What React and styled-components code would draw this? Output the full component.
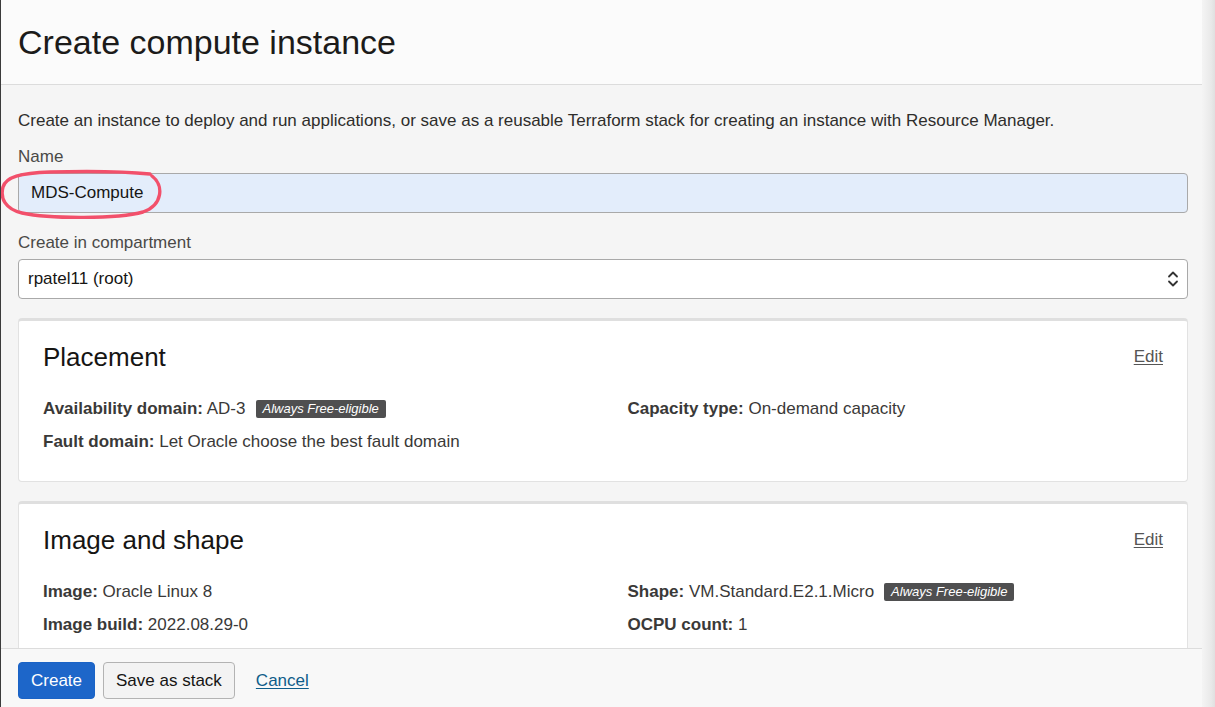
import React from "react";
import styled, { createGlobalStyle } from "styled-components";

const Global = createGlobalStyle`
  html, body { margin: 0; padding: 0; }
  body {
    font-family: "Liberation Sans", Arial, sans-serif;
    color: #161513;
    background: #f5f5f5;
  }
  #root { height: 707px; }
  * { box-sizing: border-box; }
`;

const Screen = styled.div`
  display: flex;
  height: 707px;
  overflow: hidden;
`;

const Panel = styled.div`
  flex: 1;
  display: flex;
  flex-direction: column;
  border-left: 1px solid #3b3b3b;
  background: #f5f5f5;
  min-width: 0;
`;

const EdgeShadow = styled.div`
  width: 13px;
  background: linear-gradient(to right, #f4f4f4, #e9e9e9 70%, #e0e0e0);
`;

const Header = styled.header`
  height: 85px;
  flex: none;
  background: #fbfbfb;
  border-bottom: 1px solid #dcdcdc;
  padding: 22px 17px 0;
`;

const Title = styled.h1`
  margin: 0;
  font-weight: 400;
  font-size: 34px;
  line-height: 40px;
  color: #1c1b1a;
`;

const Body = styled.main`
  flex: 1;
  overflow: hidden;
  padding: 26px 14px 0 17px;
`;

const Intro = styled.p`
  margin: 0 0 16px;
  font-size: 17px;
  line-height: 20px;
  color: #2e2d2b;
`;

const Field = styled.div`
  display: flex;
  flex-direction: column;
  gap: 6px;
  margin-bottom: ${(p) => p.$mb || "20px"};
`;

const Label = styled.label`
  font-size: 17px;
  line-height: 20px;
  color: #4a4947;
`;

const InputWrap = styled.div`
  position: relative;
`;

const TextBox = styled.div`
  height: 40px;
  border: 1px solid #a9a9a9;
  border-radius: 4px;
  background: ${(p) => (p.$filled ? "#e3edfb" : "#ffffff")};
  display: flex;
  align-items: center;
  justify-content: space-between;
  padding: 0 8px 0 ${(p) => (p.$filled ? "12px" : "9px")};
  font-size: 17px;
  color: #161513;
`;

const Scribble = styled.svg`
  position: absolute;
  left: -18px;
  top: -4px;
  width: 180px;
  height: 52px;
  pointer-events: none;
  overflow: visible;
`;

const Card = styled.section`
  background: #ffffff;
  border: 1px solid #e2e2e2;
  border-top: 3px solid #dfdfdf;
  border-radius: 4px;
  padding: 20px 24px 24px 24px;
  margin-bottom: 19px;
  min-height: ${(p) => p.$minH || "auto"};
`;

const CardHead = styled.div`
  display: flex;
  justify-content: space-between;
  align-items: center;
  margin-bottom: 24px;
`;

const CardTitle = styled.h2`
  margin: 0;
  font-weight: 400;
  font-size: 26px;
  line-height: 32px;
  color: #161513;
`;

const EditLink = styled.a`
  font-size: 17px;
  color: #555;
  text-decoration: underline;
  text-underline-offset: 2px;
`;

const Grid = styled.div`
  display: grid;
  grid-template-columns: 1fr 1fr;
  column-gap: 49px;
  row-gap: 9px;
`;

const Item = styled.div`
  font-size: 17px;
  line-height: 24px;
  color: #3a3938;
  display: flex;
  align-items: center;
  white-space: pre;
`;

const Key = styled.b`
  font-weight: 700;
  color: #3a3938;
`;

const Badge = styled.span`
  display: inline-block;
  margin-left: 10px;
  background: #4f4f50;
  color: #fff;
  font-style: italic;
  font-size: 13px;
  line-height: 18px;
  padding: 0 7px;
  border-radius: 2px;
`;

const Footer = styled.footer`
  flex: none;
  height: 59px;
  border-top: 1px solid #dcdcdc;
  background: #f8f8f8;
  display: flex;
  align-items: flex-start;
  padding: 13px 17px 0;
  gap: 8px;
`;

const Button = styled.button`
  height: 37px;
  border-radius: 4px;
  font-family: inherit;
  font-size: 17px;
  padding: 0 12px;
  border: 1px solid ${(p) => (p.$primary ? "#1a63c6" : "#b3b3b3")};
  background: ${(p) => (p.$primary ? "#1d66c9" : "#f3f3f3")};
  color: ${(p) => (p.$primary ? "#ffffff" : "#161513")};
`;

const Cancel = styled.a`
  margin-left: 13px;
  font-size: 17px;
  line-height: 37px;
  color: #0f5d8a;
  text-decoration: underline;
  text-underline-offset: 2px;
`;

function UpDown() {
  return (
    <svg width="12" height="18" viewBox="0 0 12 18" fill="none" stroke="#333" strokeWidth="1.8" strokeLinecap="round" strokeLinejoin="round">
      <path d="M2 6.5 L6 2.5 L10 6.5" />
      <path d="M2 11.5 L6 15.5 L10 11.5" />
    </svg>
  );
}

export default function App() {
  return (
    <>
      <Global />
      <Screen>
        <Panel>
          <Header>
            <Title>Create compute instance</Title>
          </Header>
          <Body>
            <Intro>
              Create an instance to deploy and run applications, or save as a reusable Terraform stack for creating an instance with Resource Manager.
            </Intro>
            <Field>
              <Label>Name</Label>
              <InputWrap>
                <TextBox $filled>MDS-Compute</TextBox>
                <Scribble viewBox="0 0 180 52">
                  <path
                    d="M152 7 C164 16 163 36 143 43 C118 50 50 50 22 44 C5 40 0 29 3 18 C6 8 20 4 50 3 C90 2 130 3 150 5"
                    fill="none"
                    stroke="#f2506b"
                    strokeWidth="3.4"
                    strokeLinecap="round"
                  />
                </Scribble>
              </InputWrap>
            </Field>
            <Field $mb="19px">
              <Label>Create in compartment</Label>
              <TextBox>
                <span>rpatel11 (root)</span>
                <UpDown />
              </TextBox>
            </Field>
            <Card $minH="164px">
              <CardHead>
                <CardTitle>Placement</CardTitle>
                <EditLink>Edit</EditLink>
              </CardHead>
              <Grid>
                <Item>
                  <Key>Availability domain:</Key> AD-3
                  <Badge>Always Free-eligible</Badge>
                </Item>
                <Item>
                  <Key>Capacity type:</Key> On-demand capacity
                </Item>
                <Item>
                  <Key>Fault domain:</Key> Let Oracle choose the best fault domain
                </Item>
              </Grid>
            </Card>
            <Card>
              <CardHead>
                <CardTitle>Image and shape</CardTitle>
                <EditLink>Edit</EditLink>
              </CardHead>
              <Grid>
                <Item>
                  <Key>Image:</Key> Oracle Linux 8
                </Item>
                <Item>
                  <Key>Shape:</Key> VM.Standard.E2.1.Micro
                  <Badge>Always Free-eligible</Badge>
                </Item>
                <Item>
                  <Key>Image build:</Key> 2022.08.29-0
                </Item>
                <Item>
                  <Key>OCPU count:</Key> 1
                </Item>
              </Grid>
            </Card>
          </Body>
          <Footer>
            <Button $primary>Create</Button>
            <Button>Save as stack</Button>
            <Cancel>Cancel</Cancel>
          </Footer>
        </Panel>
        <EdgeShadow />
      </Screen>
    </>
  );
}
